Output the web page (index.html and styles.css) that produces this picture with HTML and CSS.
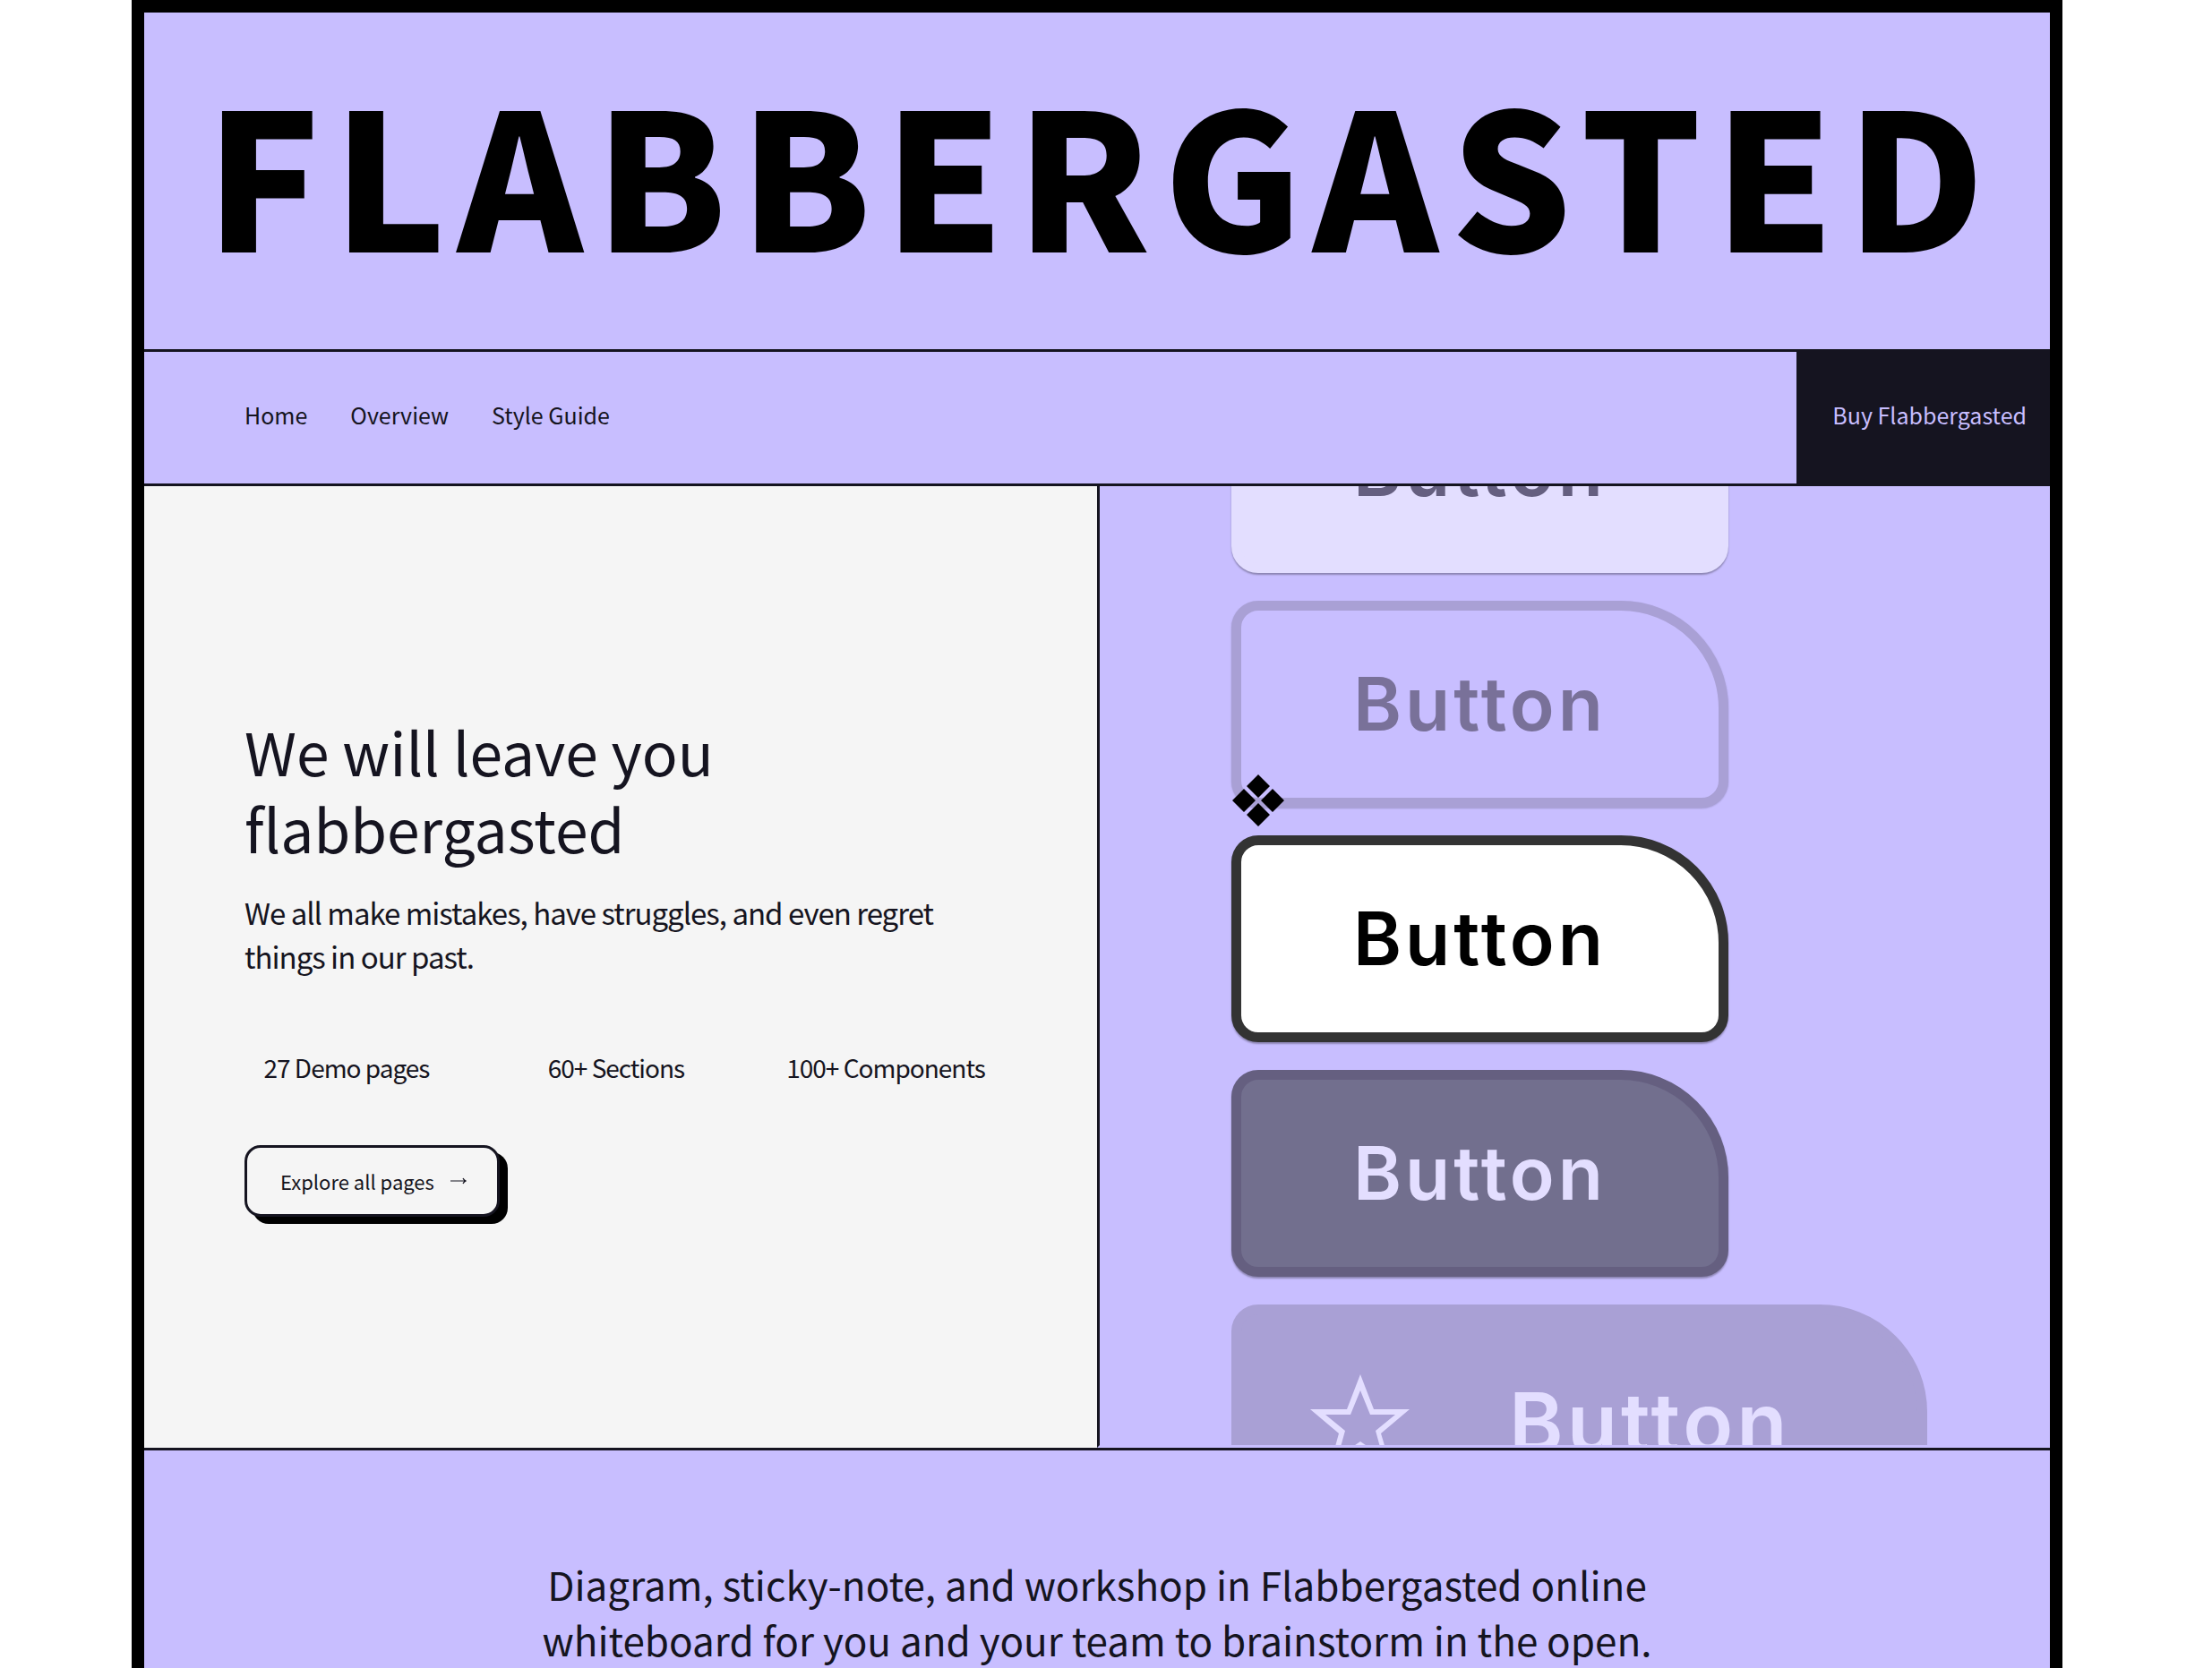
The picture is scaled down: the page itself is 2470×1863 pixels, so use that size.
FILE: index.html
```html
<!DOCTYPE html>
<html lang="en">
<head>
    <meta charset="UTF-8">
    <meta name="viewport" content="width=device-width, initial-scale=1.0">
    <title>Flabbergasted</title>
    <link rel="stylesheet" href="styles.css">
</head>
<body>
    <div class="frame">
        <header class="masthead">
            <h1>FLABBERGASTED</h1>
        </header>

        <nav class="navbar">
            <div class="nav-links">
                <a href="#home">Home</a>
                <a href="#overview">Overview</a>
                <a href="#style-guide">Style Guide</a>
            </div>
            <a class="nav-buy" href="#buy">Buy Flabbergasted</a>
        </nav>

        <main>
            <section class="hero" id="home">
                <div class="hero-text">
                    <h2>We will leave you flabbergasted</h2>
                    <p class="lead">We all make mistakes, have struggles, and even regret things in our past.</p>
                    <ul class="stats">
                        <li>27 Demo pages</li>
                        <li>60+ Sections</li>
                        <li>100+ Components</li>
                    </ul>
                    <a class="explore" href="#overview">
                        Explore all pages
                        <svg width="18" height="8" viewBox="0 0 18 8" aria-hidden="true">
                            <path d="M0 4H17M14 1Q15 3 17 4Q15 5 14 7" fill="none" stroke="currentColor" stroke-width="1.2"/>
                        </svg>
                    </a>
                </div>

                <!-- Button samples -->
                <div class="showcase">
                    <div class="samples">
                        <button class="sample light" type="button">Button</button>
                        <button class="sample ghost" type="button">Button</button>
                        <button class="sample outline" type="button">Button</button>
                        <button class="sample dark" type="button">Button</button>
                        <button class="sample large" type="button">
                            <svg width="112" height="106" viewBox="0 0 112 106" aria-hidden="true">
                                <path d="M56 0L71 39H111L79 66L91 106L56 84L21 106L32 66L0 39H41ZM56 18L45 45H17L39 63L31 92L56 75L81 92L73 63L95 45H67Z" fill="currentColor" fill-rule="evenodd"/>
                            </svg>
                            Button
                        </button>
                        <svg class="marker" width="58" height="58" viewBox="0 0 58 58" aria-hidden="true">
                            <path d="M29 0L42 13L29 26L16 13ZM13 16L26 29L13 42L0 29ZM45 16L58 29L45 42L32 29ZM29 32L42 45L29 58L16 45Z"/>
                        </svg>
                    </div>
                </div>
            </section>

            <section class="intro" id="overview">
                <p>Diagram, sticky-note, and workshop in Flabbergasted online whiteboard for you and your team to brainstorm in the open.</p>
            </section>
        </main>
    </div>
</body>
</html>
```
FILE: styles.css
```css
* {
    box-sizing: border-box;
}

body {
    margin: 0;
    background: #fff;
    color: #151420;
    font-family: "Noto Sans CJK SC", "Noto Sans", sans-serif;
}

a {
    color: inherit;
    text-decoration: none;
}

.frame {
    min-height: 100vh;
    margin: 0 167px 0 147px;
    border: 14px solid #000;
    border-bottom: 0;
    background: #c8beff;
}

/* Title */
.masthead {
    padding: 2px 0 26px 10px;
    border-bottom: 3px solid #151420;
}

.masthead h1 {
    margin: 0;
    color: #000;
    font-size: 212px;
    font-weight: 900;
    line-height: 348px;
    letter-spacing: 14px;
    text-align: center;
    white-space: nowrap;
}

/* Navigation */
.navbar {
    display: flex;
    justify-content: space-between;
    border-bottom: 3px solid #151420;
    font-size: 25px;
    line-height: 141px;
}

.nav-links {
    display: flex;
    gap: 48px;
    padding: 0 0 6px 112px;
}

.nav-buy {
    padding: 0 26px 6px 40px;
    background: #151420;
    color: #c8beff;
}

/* Hero */
.hero {
    display: grid;
    grid-template-columns: 1fr 1fr;
    border-bottom: 3px solid #151420;
}

.hero-text {
    display: flex;
    flex-direction: column;
    justify-content: center;
    align-items: flex-start;
    padding: 0 122px 6px 112px;
    background: #f5f5f5;
}

.hero-text h2 {
    margin: 0 0 28px;
    font-size: 66px;
    font-weight: 400;
    line-height: 86px;
}

.lead {
    margin: 0 0 79px;
    font-size: 33px;
    line-height: 49px;
    letter-spacing: -1px;
}

.stats {
    display: grid;
    grid-template-columns: repeat(3, 1fr);
    gap: 73px;
    width: 100%;
    margin: 0 0 67px;
    padding: 0;
    list-style: none;
    font-size: 28px;
    line-height: 40px;
    letter-spacing: -1px;
    white-space: nowrap;
}

.stats li {
    display: flex;
    justify-content: center;
    min-width: 0;
}

.explore {
    display: flex;
    align-items: center;
    gap: 18px;
    padding: 2px 34px 2px 37px;
    border: 3px solid #151420;
    border-radius: 18px;
    background: #f5f5f5;
    box-shadow: 9px 8px 0 #000;
    font-size: 22px;
    line-height: 70px;
}

/* Button samples, cut off at the top and bottom of the panel */
.showcase {
    height: 1074px;
    padding-left: 147px;
    overflow: hidden;
    border-left: 3px solid #151420;
    border-bottom: 3px solid #c8beff;
}

.samples {
    position: relative;
    display: flex;
    flex-direction: column;
    align-items: flex-start;
    gap: 31px;
    margin-top: -134px;
}

.sample {
    flex: none;
    width: 555px;
    height: 231px;
    padding: 0;
    border: 11px solid transparent;
    border-radius: 30px 120px 30px 30px;
    box-shadow: 0 2px 2px rgba(0, 0, 0, 0.3);
    font-family: Inter, "Noto Sans", sans-serif;
    font-size: 82px;
    font-weight: 600;
    letter-spacing: 4px;
}

.light {
    border-color: #e3deff;
    background: #e3deff;
    color: #655f80;
}

.ghost {
    border-color: #a9a0d5;
    background: #c8beff;
    color: #797199;
    box-shadow: 0 1px 2px rgba(0, 0, 0, 0.2);
}

.outline {
    border-color: #333;
    background: #fff;
    color: #000;
}

.dark {
    border-color: #655f80;
    background: #726f8e;
    color: #e3deff;
}

.large {
    display: flex;
    align-items: center;
    gap: 110px;
    width: 777px;
    height: 262px;
    padding-left: 77px;
    border-color: #a9a0d5;
    background: #a9a0d5;
    color: #e3deff;
    box-shadow: none;
    font-size: 92px;
}

.marker {
    position: absolute;
    top: 456px;
    left: 1px;
}

/* Intro text */
.intro {
    padding-top: 118px;
    text-align: center;
}

.intro p {
    max-width: 1280px;
    margin: 0 auto;
    font-size: 44px;
    line-height: 62px;
}
```
